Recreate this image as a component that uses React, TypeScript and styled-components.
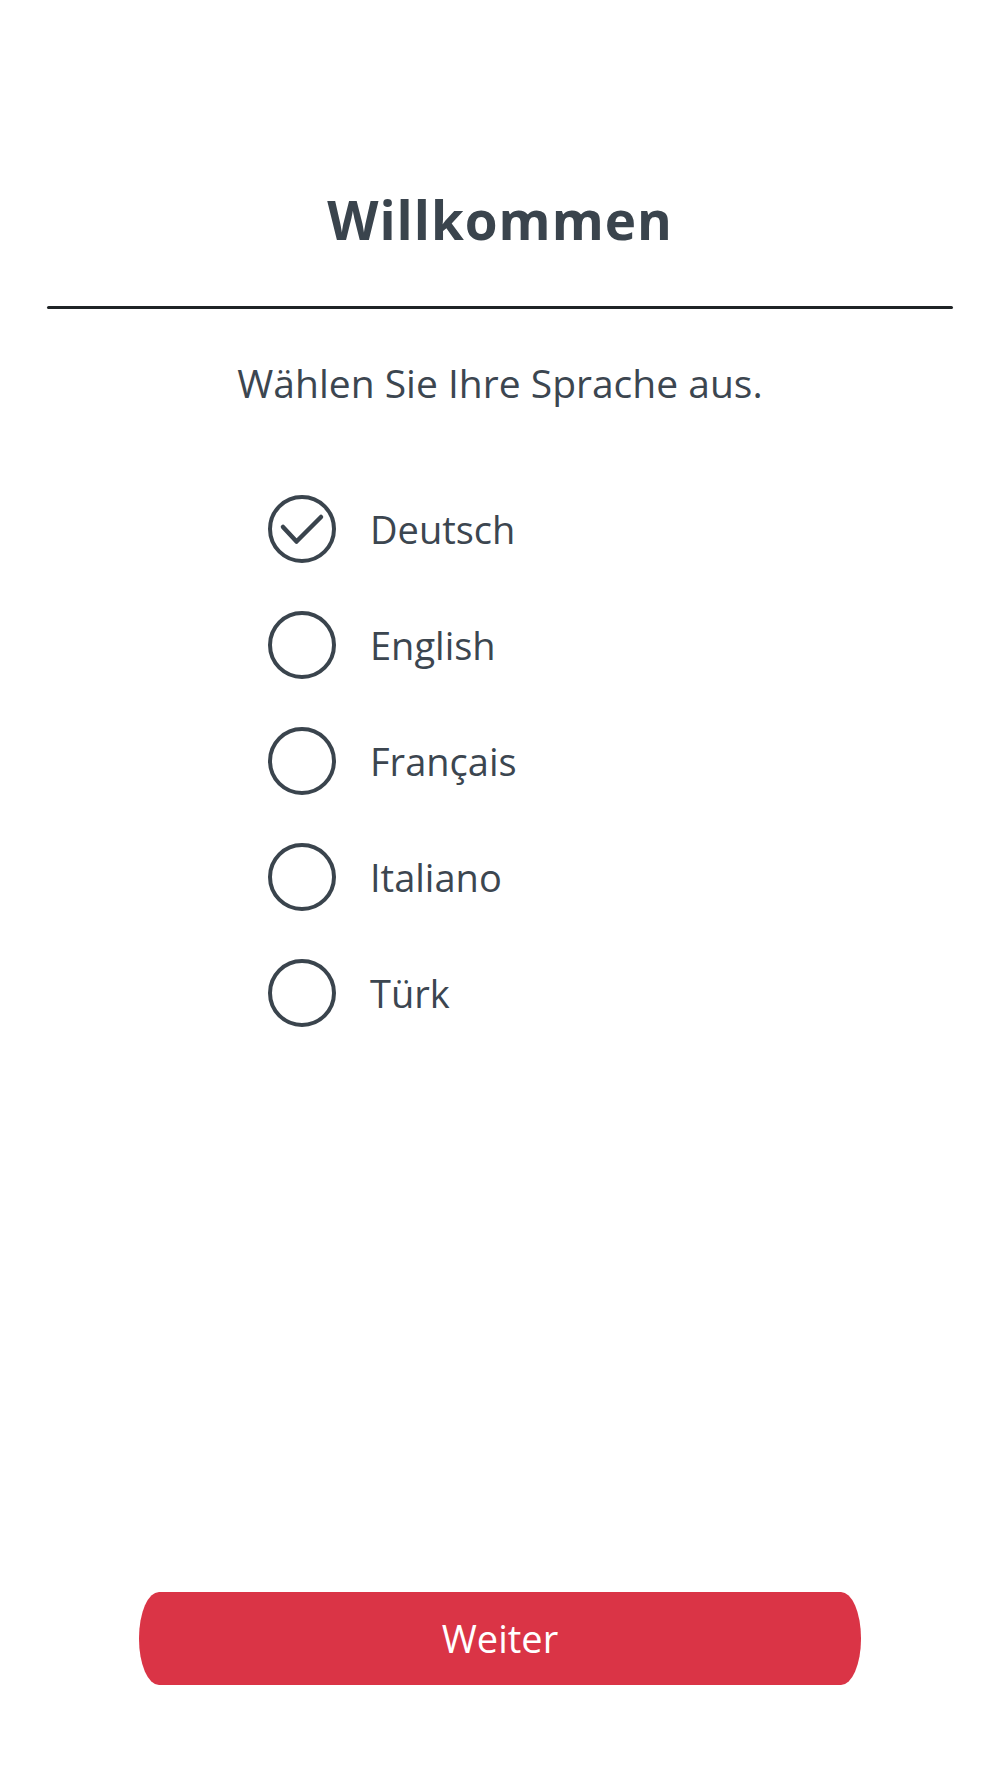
import { FC, useState } from 'react'
import styled, { createGlobalStyle } from 'styled-components'

const GlobalStyle = createGlobalStyle`
  html, body {
    margin: 0;
    padding: 0;
    background: #ffffff;
  }
  body {
    font-family: 'Open Sans', 'Noto Sans', sans-serif;
    color: #3c4650;
  }
`

const Page = styled.div`
  display: flex;
  flex-direction: column;
  align-items: center;
  width: 1000px;
  height: 1778px;
  box-sizing: border-box;
  padding-top: 193px;
  padding-bottom: 93px;
  background: #ffffff;
`

const Title = styled.h1`
  margin: 0;
  font-size: 53px;
  line-height: 1;
  font-weight: 700;
  letter-spacing: 1px;
  color: #3a444d;
`

const Divider = styled.hr`
  align-self: stretch;
  margin: 60px 47px 0;
  border: none;
  height: 3px;
  background: #1f2326;
  border-radius: 2px;
`

const Subtitle = styled.p`
  margin: 54px 0 0;
  font-size: 39px;
  line-height: 1;
  color: #3c4650;
`

const OptionList = styled.ul`
  align-self: flex-start;
  list-style: none;
  margin: 93px 0 0 268px;
  padding: 0;
  display: flex;
  flex-direction: column;
  gap: 48px;
`

const OptionRow = styled.li`
  display: flex;
  align-items: center;
  gap: 34px;
  height: 68px;
  cursor: pointer;
`

const RadioMark = styled.span<{ $checked: boolean }>`
  display: flex;
  align-items: center;
  justify-content: center;
  width: 68px;
  height: 68px;
  box-sizing: border-box;
  border: 4px solid #3a444d;
  border-radius: 50%;
  color: #3a444d;
  flex-shrink: 0;
`

const OptionLabel = styled.span`
  font-size: 38px;
  line-height: 1;
  color: #3c4650;
`

const Spacer = styled.div`
  flex-grow: 1;
`

const NextButton = styled.button`
  width: 722px;
  height: 93px;
  border: none;
  border-radius: 20px / 46px;
  background: #da3446;
  color: #ffffff;
  font-family: 'Open Sans', 'Noto Sans', sans-serif;
  font-size: 38px;
  line-height: 93px;
  padding: 0;
  cursor: pointer;
`

const languages = ['Deutsch', 'English', 'Français', 'Italiano', 'Türk']

const CheckIcon: FC = () => (
  <svg width="68" height="68" viewBox="-34 -34 68 68" fill="none" style={{ margin: -4 }}>
    <polyline
      points="-19,-2 -5.5,12.5 19,-12"
      stroke="currentColor"
      strokeWidth="4.5"
      strokeLinecap="round"
      strokeLinejoin="round"
    />
  </svg>
)

const App: FC = () => {
  const [selected, setSelected] = useState('Deutsch')

  return (
    <>
      <GlobalStyle />
      <Page>
        <Title>Willkommen</Title>
        <Divider />
        <Subtitle>Wählen Sie Ihre Sprache aus.</Subtitle>
        <OptionList>
          {languages.map((lang) => (
            <OptionRow key={lang} onClick={() => setSelected(lang)}>
              <RadioMark $checked={selected === lang}>{selected === lang && <CheckIcon />}</RadioMark>
              <OptionLabel>{lang}</OptionLabel>
            </OptionRow>
          ))}
        </OptionList>
        <Spacer />
        <NextButton>Weiter</NextButton>
      </Page>
    </>
  )
}

export default App
